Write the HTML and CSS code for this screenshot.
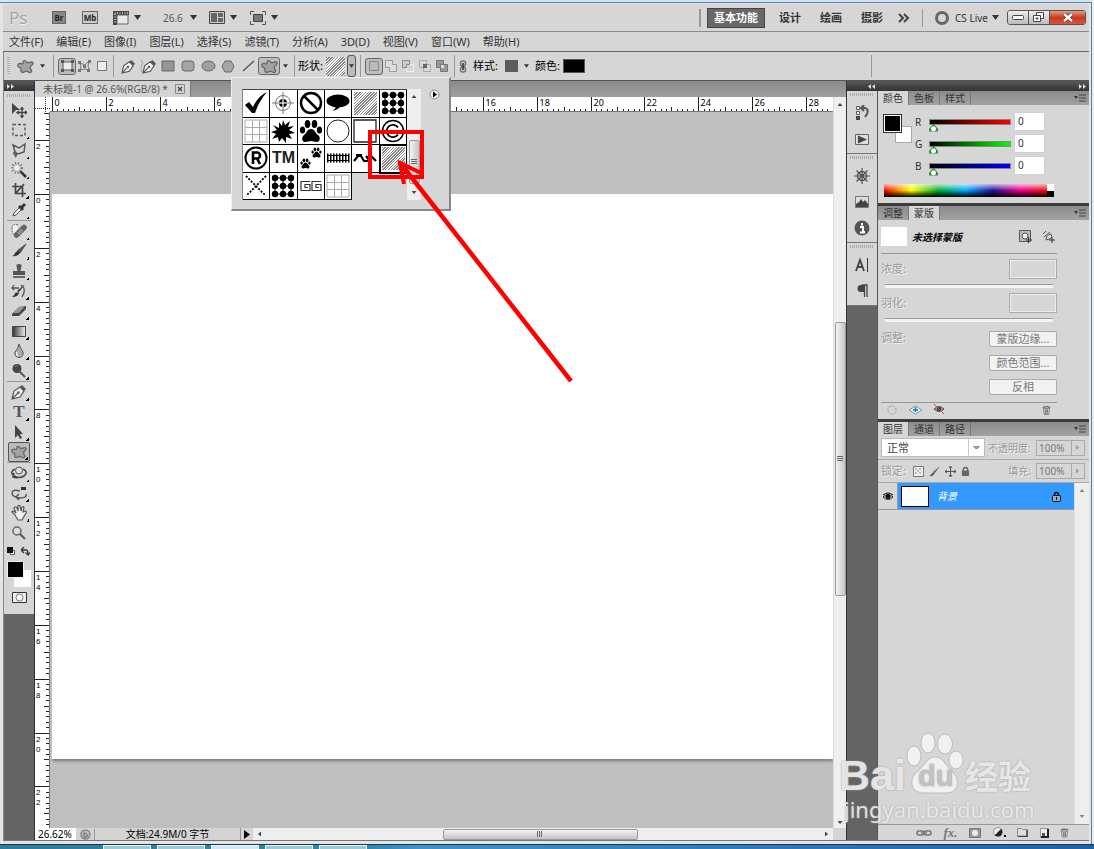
FILE: index.html
```html
<!DOCTYPE html>
<html lang="zh-CN">
  <head>
    <meta charset="UTF-8">
    <meta name="viewport" content="width=device-width, initial-scale=1.0">
    <title>未标题-1 @ 26.6%(RGB/8)</title>
    <link rel="stylesheet" href="styles.css">
  </head>
  <body>
    <!-- Shared icon shapes -->
    <svg class="sprite" aria-hidden="true">
      <symbol id="caret" viewBox="0 0 7 5"><path d="M0 0h7L3.5 5z" fill="#333"/></symbol>
      <symbol id="blob" viewBox="0 0 18 16"><path d="M7 2c2-1 3 1 4 2 2 0 5-2 6 0s-3 3-3 5 3 3 1 5-3-1-5-1-3 2-5 1 0-3-1-4-4-1-3-4 4 0 5-1 0-2 1-3z" fill="#a2a2a2" stroke="#666" stroke-width="1.4"/></symbol>
      <symbol id="pen" viewBox="0 0 16 16"><path d="M1 15l2-8 6-4 4 4-4 6zM1 15l6-6" fill="#eee" stroke="#555" stroke-width="1.2"/><path d="M9 3l2-2 4 4-2 2z" fill="#555"/><circle cx="7.500" cy="8.500" r="1.200" fill="#555"/></symbol>
      <symbol id="trash" viewBox="0 0 12 12"><path d="M2 4h8l-1 8H3z" fill="#ddd" stroke="#666"/><path d="M5 5v6M7 5v6M1 3q5-3 10 0" fill="none" stroke="#666" stroke-width="1.400"/></symbol>
      <symbol id="lock" viewBox="0 0 10 12"><path d="M2.500 6V4a2.500 2.500 0 0 1 5 0v2" fill="none" stroke="currentColor" stroke-width="1.500"/><rect x="1" y="5" width="8" height="6" rx="1" fill="currentColor"/></symbol>
      <symbol id="dots" viewBox="0 0 24 24"><g fill="#000"><circle cx="4" cy="4" r="3.200"/><circle cx="12" cy="4" r="3.200"/><circle cx="20" cy="4" r="3.200"/><circle cx="4" cy="12" r="3.200"/><circle cx="12" cy="12" r="3.200"/><circle cx="20" cy="12" r="3.200"/><circle cx="4" cy="20" r="3.200"/><circle cx="12" cy="20" r="3.200"/><circle cx="20" cy="20" r="3.200"/></g><path d="M4 4h16v16H4zM4 12h16M12 4v16" fill="none" stroke="#000" stroke-width="1"/></symbol>
      <symbol id="grid" viewBox="0 0 24 24"><path d="M1 1h22v22H1zM8.500 1v22M15.500 1v22M1 8.500h22M1 15.500h22" fill="none" stroke="#aaa"/></symbol>
      <symbol id="paw" viewBox="0 0 24 24"><ellipse cx="3.500" cy="11" rx="2.600" ry="3.600"/><ellipse cx="8.500" cy="5" rx="2.800" ry="4"/><ellipse cx="15.500" cy="5" rx="2.800" ry="4"/><ellipse cx="20.500" cy="11" rx="2.600" ry="3.600"/><path d="M12 10c4 0 4 4 7 6s2 7-1 7-4-1-6-1-3 1-6 1-4-5-1-7 3-6 7-6z"/></symbol>
      <symbol id="panelmenu" viewBox="0 0 12 8"><path d="M0 2h4L2 5z" fill="#333"/><path d="M5 1h7M5 4h7M5 7h7" stroke="#444"/></symbol>
    </svg>

    <div class="window">
      <header class="appbar">
        <span class="logo">Ps</span>
        <button class="square br">Br</button>
        <button class="square mb">Mb</button>
        <button class="drop"><svg width="16" height="14" viewBox="0 0 16 14"><path d="M0 0h16v4H4v10H0z" fill="#444"/><path d="M1.500 2h14M2 3v10" stroke="#ddd" stroke-width="1.500" stroke-dasharray="1 1.500"/><path d="M4 4h11v9H4z" fill="#e8e8e8" stroke="#666"/></svg><svg class="caret"><use href="#caret"/></svg></button>
        <button class="drop zoom">26.6<svg class="caret"><use href="#caret"/></svg></button>
        <button class="drop layout"><svg width="16" height="13" viewBox="0 0 16 13"><path d="M.5.500h15v12H.5z" fill="#ccc" stroke="#444"/><path d="M2 2h6v9H2zM9 2h5v4H9zM9 7h5v4H9z" fill="#666"/></svg><svg class="caret"><use href="#caret"/></svg></button>
        <button class="drop"><svg width="16" height="14" viewBox="0 0 16 14"><path d="M.5 4V.500H4M12 .500h3.500V4M.5 10v3.500H4M12 13.500h3.500V10" fill="none" stroke="#555"/><path d="M3.500 3.500h9v7h-9z" fill="#777" stroke="#444"/></svg><svg class="caret"><use href="#caret"/></svg></button>
        <nav class="workspaces">
          <button class="current">基本功能</button>
          <button>设计</button>
          <button>绘画</button>
          <button>摄影</button>
          <button class="more" aria-label="更多工作区"><svg width="12" height="10" viewBox="0 0 12 10"><path d="M1 1l4 4-4 4M6 1l4 4-4 4" fill="none" stroke="#444" stroke-width="2"/></svg></button>
        </nav>
        <button class="cslive"><span class="ring"></span>CS Live<svg class="caret"><use href="#caret"/></svg></button>
        <div class="winbuttons">
          <button aria-label="最小化"><svg width="12" height="6" viewBox="0 0 12 6"><rect x=".5" y=".5" width="11" height="4" rx="1" fill="#fff" stroke="#444"/></svg></button>
          <button aria-label="还原"><svg width="12" height="11" viewBox="0 0 12 11"><path d="M3.500.500h7v6h-7z" fill="#fff" stroke="#444"/><path d="M.5 3.500h7v6h-7zM3 6h2v1H3z" fill="#fff" stroke="#444"/></svg></button>
          <button class="close" aria-label="关闭"><svg width="12" height="9" viewBox="0 0 12 9"><path d="M2 1l8 7M10 1L2 8" stroke="#633" stroke-width="4"/><path d="M2 1l8 7M10 1L2 8" stroke="#fff" stroke-width="2.400"/></svg></button>
        </div>
      </header>

      <nav class="menubar">
        <button>文件(F)</button><button>编辑(E)</button><button>图像(I)</button><button>图层(L)</button><button>选择(S)</button><button>滤镜(T)</button><button>分析(A)</button><button>3D(D)</button><button>视图(V)</button><button>窗口(W)</button><button>帮助(H)</button>
      </nav>

      <div class="options">
        <span class="vgrip"></span>
        <button class="preset" aria-label="工具预设"><svg width="17" height="15"><use href="#blob"/></svg><svg class="caret small"><use href="#caret"/></svg></button>
        <span class="sep"></span>
        <div class="modes">
          <button class="on" aria-label="形状图层"><svg width="13" height="12" viewBox="0 0 13 12"><path d="M2 2h9v8H2z" fill="#eee" stroke="#555"/><path d="M0 0h3v3H0zM10 0h3v3h-3zM0 9h3v3H0zM10 9h3v3h-3z" fill="#555"/></svg></button>
          <button aria-label="路径"><svg width="13" height="12" viewBox="0 0 13 12"><path d="M2 3l5 2 4-4-1 5 1 4-4-1-5 1 1-3z" fill="#ddd" stroke="#777"/><path d="M0 1h3v3H0zM10 0h3v3h-3zM0 9h3v3H0zM9 9h3v3H9zM5 5h3v3H5z" fill="#777"/></svg></button>
          <button aria-label="填充像素"><svg width="10" height="10" viewBox="0 0 10 10"><path d="M.5.500h9v9h-9z" fill="#eee" stroke="#777"/></svg></button>
        </div>
        <span class="sep"></span>
        <div class="shapes">
          <button aria-label="钢笔"><svg width="15" height="15"><use href="#pen"/></svg></button>
          <button aria-label="自由钢笔"><svg width="17" height="15" viewBox="0 0 18 16"><path d="M1 2q3 0 1 4t0 8" fill="none" stroke="#666" stroke-dasharray="1 1"/><use href="#pen" x="2" width="16" height="16"/></svg></button>
          <button aria-label="矩形"><svg width="14" height="12" viewBox="0 0 14 12"><path d="M1 1h12v10H1z" fill="#959595" stroke="#666"/></svg></button>
          <button aria-label="圆角矩形"><svg width="14" height="12" viewBox="0 0 14 12"><rect x="1" y="1" width="12" height="10" rx="3" fill="#a5a5a5" stroke="#666"/></svg></button>
          <button aria-label="椭圆"><svg width="15" height="12" viewBox="0 0 15 12"><ellipse cx="7.500" cy="6" rx="6.500" ry="5" fill="#a0a0a0" stroke="#666"/></svg></button>
          <button aria-label="多边形"><svg width="14" height="13" viewBox="0 0 14 13"><path d="M4 1h6l3 5.500-3 5.500H4L1 6.500z" fill="#a5a5a5" stroke="#666"/></svg></button>
          <button aria-label="直线"><svg width="13" height="12" viewBox="0 0 13 12"><path d="M1 11L12 1" stroke="#555" stroke-width="1.300"/></svg></button>
          <button class="on" aria-label="自定形状"><svg width="17" height="15"><use href="#blob"/></svg></button>
        </div>
        <svg class="caret small"><use href="#caret"/></svg>
        <span class="sep"></span>
        <span class="label">形状:</span>
        <span class="hatch current-shape"></span>
        <button class="shape-open" aria-label="打开形状列表"><svg class="caret small"><use href="#caret"/></svg></button>
        <span class="sep"></span>
        <div class="modes">
          <button class="on" aria-label="新建形状图层"><svg width="12" height="12" viewBox="0 0 12 12"><path d="M1.500 1.500h9v9h-9z" fill="#bbb" stroke="#888"/></svg></button>
          <button aria-label="添加"><svg width="12" height="12" viewBox="0 0 12 12"><path d="M.5.500h7v4h4v7h-7v-4h-4z" fill="#ddd" stroke="#999"/></svg></button>
          <button aria-label="减去"><svg width="12" height="12" viewBox="0 0 12 12"><path d="M.5.500h7v4h-3v3h-4z" fill="#ccc" stroke="#888"/><path d="M8 4.500h3.500v7h-7V8" fill="none" stroke="#eee"/></svg></button>
          <button aria-label="交叉"><svg width="12" height="12" viewBox="0 0 12 12"><path d="M.5.500h7v7h-7zM4.500 4.500h7v7h-7z" fill="none" stroke="#aaa"/><path d="M4 4h4v4H4z" fill="#666"/></svg></button>
          <button aria-label="重叠除外"><svg width="12" height="12" viewBox="0 0 12 12"><path d="M.5.500h7v7h-7zM4.500 4.500h7v7h-7z" fill="#999" stroke="#777"/><path d="M5 5h3v3H5z" fill="#ddd"/></svg></button>
        </div>
        <span class="sep"></span>
        <svg class="chain" width="8" height="13" viewBox="0 0 8 13"><rect x="1.500" y="1" width="5" height="5" rx="2" fill="#ccc" stroke="#777" stroke-width="1.500"/><rect x="1.500" y="7" width="5" height="5" rx="2" fill="#ccc" stroke="#777" stroke-width="1.500"/><path d="M4 3v7" stroke="#333" stroke-width="1.500"/></svg>
        <span class="label">样式:</span>
        <button class="style-swatch" aria-label="样式"></button>
        <svg class="caret small"><use href="#caret"/></svg>
        <span class="label">颜色:</span>
        <button class="color-swatch" aria-label="颜色"></button>
        <span class="sep end"></span>
      </div>

      <main class="workarea">
        <aside class="toolbox">
          <div class="strip"><svg width="7" height="5" viewBox="0 0 7 5"><path d="M0 0l3 2.500L0 5zM4 0l3 2.500L4 5z" fill="#ddd"/></svg></div>
          <div class="tools">
            <span class="grip"></span>
            <div class="group">
              <button class="plain" aria-label="移动"><svg viewBox="0 0 16 16"><path d="M1 1l8 7H5l-4 4z" fill="#444"/><path d="M11 6v9M6.500 10.500h9M9.500 7.500L11 5.500l1.500 2M9.500 13.500l1.500 2 1.500-2M8 9l-2 1.500L8 12M14 9l2 1.500-2 1.500" fill="none" stroke="#444" stroke-width="1.300"/></svg></button>
              <button aria-label="选框"><svg viewBox="0 0 16 16"><path d="M2 2.500h12v11H2z" fill="none" stroke="#555" stroke-width="1.400" stroke-dasharray="3 2"/></svg></button>
              <button aria-label="套索"><svg viewBox="0 0 16 16"><path d="M2 3l6 3 6-4-1 8-6 2-3-2zM5 10q-3 0-2 2t2-1q1 3-1 4" fill="none" stroke="#555" stroke-width="1.400"/></svg></button>
              <button aria-label="魔棒"><svg viewBox="0 0 16 16"><path d="M9 9l6 6" stroke="#333" stroke-width="2.500"/><circle cx="6" cy="6" r="3.500" fill="#eee" stroke="#aaa"/><circle cx="6" cy="6" r="5" fill="none" stroke="#666" stroke-width="2" stroke-dasharray="1 2"/></svg></button>
              <button aria-label="裁剪"><svg viewBox="0 0 16 16"><path d="M4.500 1v10.500H15M1 4.500h10.500V15M13 2L5 11" fill="none" stroke="#444" stroke-width="1.700"/></svg></button>
              <button aria-label="吸管"><svg viewBox="0 0 16 16"><path d="M2 14l1-3 6-6 2 2-6 6z" fill="#eee" stroke="#555"/><path d="M8 4l4 4M10 6l4-4" stroke="#333" stroke-width="3"/></svg></button>
            </div>
            <hr>
            <div class="group">
              <button aria-label="修复画笔"><svg viewBox="0 0 16 16"><path d="M7 2Q1 0 1 6t5 7" fill="#eee" stroke="#555" stroke-dasharray="1.500 1"/><path d="M5.500 12L13 4.500" stroke="#666" stroke-width="5.500" stroke-linecap="round"/><path d="M7.500 10.500l3.500-3.500" stroke="#bbb" stroke-width="3" stroke-dasharray="1 1"/></svg></button>
              <button aria-label="画笔"><svg viewBox="0 0 16 16"><path d="M15 1L9 10 6 8z" fill="#555" stroke="#555"/><path d="M9 9q-1 5-8 4 3-1 3-3 2-3 5-1z" fill="#333"/></svg></button>
              <button aria-label="图章"><svg viewBox="0 0 16 16"><path d="M6.500 8l-1-5Q5 1 8 1t2.500 2l-1 5h4.500v4H2V8z" fill="#555"/><path d="M2 14h12" stroke="#444" stroke-width="1.500"/></svg></button>
              <button aria-label="历史记录画笔"><svg viewBox="0 0 16 16"><path d="M1 5h7M3 2L1 5l2 2M10 2q6 4 1 12" fill="none" stroke="#555" stroke-width="1.300"/><path d="M14 1L8 9 6 8zM8 9q0 5-7 5 3-2 3-4z" fill="#333"/></svg></button>
              <button aria-label="橡皮擦"><svg viewBox="0 0 16 16"><path d="M1 11l7-7 7-1v3l-7 7H1z" fill="#444"/><path d="M2 10l6-6 6-1-6 7z" fill="#999"/></svg></button>
              <button aria-label="渐变"><svg viewBox="0 0 16 16"><defs><linearGradient id="ramp"><stop stop-color="#333"/><stop offset="1" stop-color="#eee"/></linearGradient></defs><path d="M1.500 3.500h13v10h-13z" fill="url(#ramp)" stroke="#444"/></svg></button>
              <button aria-label="模糊"><svg viewBox="0 0 16 16"><path d="M8 1q1 4 4 8a4.200 4.200 0 1 1-8 0q3-3 4-8z" fill="#aaa" stroke="#555"/><path d="M6 9q-1 3 1 4" fill="none" stroke="#eee" stroke-width="1.500"/></svg></button>
              <button aria-label="减淡"><svg viewBox="0 0 16 16"><circle cx="6" cy="5.500" r="4.500" fill="#444"/><path d="M8 8l6 6" stroke="#555" stroke-width="2"/><path d="M4 4q1-2 3-1" stroke="#888" fill="none"/></svg></button>
            </div>
            <hr>
            <div class="group">
              <button aria-label="钢笔"><svg viewBox="0 0 16 16"><use href="#pen"/></svg></button>
              <button aria-label="文字" class="type">T</button>
              <button aria-label="路径选择"><svg viewBox="0 0 16 16"><path d="M4 1l8 9H9l2 4-2 1-2-4-3 3z" fill="#444"/></svg></button>
              <button aria-label="自定形状" class="on"><svg viewBox="0 0 18 16"><use href="#blob"/></svg></button>
            </div>
            <hr>
            <div class="group">
              <button aria-label="3D 旋转"><svg viewBox="0 0 16 16"><path d="M4 4q-6 3-1 7 5 3 10 0 5-4-1-7M3 8l-1 4 4 1" fill="none" stroke="#444" stroke-width="1.500"/><circle cx="8" cy="5.500" r="3.500" fill="#ddd" stroke="#555"/></svg></button>
              <button aria-label="3D 相机"><svg viewBox="0 0 16 16"><path d="M9 6Q1 4 1 8t8 5q7 0 6-4M8 9l-3 3 3 3" fill="none" stroke="#555" stroke-width="1.500"/><path d="M10 2h5v3h-5z" fill="#333"/></svg></button>
              <button aria-label="抓手"><svg viewBox="0 0 16 16"><path d="M4 10L1 7q1-2 4 1L3 3q1-2 3 0l1 3V1q1-1 2 0l1 5 1-4q2-1 2 1l-1 4 2-1q2 0 1 2l-4 7H7z" fill="#eee" stroke="#555" stroke-width="1.200"/></svg></button>
              <button class="plain" aria-label="缩放"><svg viewBox="0 0 16 16"><circle cx="6" cy="6" r="4" fill="#ddd" stroke="#666" stroke-width="1.500"/><path d="M9 9l5 5" stroke="#555" stroke-width="2"/></svg></button>
            </div>
            <div class="swap">
              <svg width="8" height="8" viewBox="0 0 8 8"><path d="M3.500 3.500h4v4h-4z" fill="#fff" stroke="#555"/><path d="M0 0h6v6H0z" fill="#111"/></svg>
              <svg width="9" height="9" viewBox="0 0 9 9"><path d="M1 3h4q2 0 2 4M3 0L0 3l3 3M4.500 5.500L7 8l2-2.500" fill="none" stroke="#333" stroke-width="1.300"/></svg>
            </div>
            <div class="fgbg"><span class="bg"></span><span class="fg"></span></div>
            <button class="quickmask" aria-label="快速蒙版"><svg width="15" height="11" viewBox="0 0 15 11"><path d="M.5.500h14v10H.5z" fill="#eee" stroke="#333"/><circle cx="7.500" cy="5.500" r="3.500" fill="#fff" stroke="#777"/></svg></button>
          </div>
        </aside>

        <section class="document">
          <div class="tabbar"><div class="tab">未标题-1 @ 26.6%(RGB/8) * <button aria-label="关闭文档"><svg width="10" height="10" viewBox="0 0 10 10"><path d="M.5.500h9v9h-9z" fill="none" stroke="#888"/><path d="M3 3l4 4M7 3l-4 4" stroke="#444" stroke-width="1.300"/></svg></button></div></div>
          <div class="view">
            <svg class="corner" viewBox="0 0 15 15"><path d="M0 11.500h15M10.500 0v15" stroke="#333" stroke-dasharray="1 1"/></svg>
            <svg class="ruler" id="hruler"></svg>
            <svg class="ruler" id="vruler"></svg>
            <div class="canvas"><div class="paper"></div></div>
            <div class="vscroll">
              <span class="up"></span>
              <div class="thumb"><i></i></div>
              <span class="down"></span>
            </div>
          </div>
          <footer class="status">
            <input class="zoomvalue" aria-label="缩放比例" value="26.62%">
            <span class="clock"><svg width="11" height="11" viewBox="0 0 11 11"><circle cx="5.500" cy="5.500" r="4.500" fill="#bbb" stroke="#888" stroke-width="1.500"/><path d="M4 4v4h3q1-4-3-4" fill="none" stroke="#666"/></svg></span>
            <span class="docsize">文档:24.9M/0 字节</span>
            <button class="statusmenu" aria-label="状态菜单"><svg width="6" height="9" viewBox="0 0 6 9"><path d="M0 0l6 4.500L0 9z"/></svg></button>
            <div class="hscroll"><span class="left"></span><div class="thumb"><i></i></div><span class="right"></span></div>
          </footer>
        </section>

        <aside class="side">
          <div class="strip"><svg width="7" height="5" viewBox="0 0 7 5"><path d="M3 0L0 2.500 3 5zM7 0L4 2.500 7 5z" fill="#ddd"/></svg><svg width="7" height="5" viewBox="0 0 7 5"><path d="M0 0l3 2.500L0 5zM4 0l3 2.500L4 5z" fill="#ddd"/></svg></div>
          <div class="columns">
            <div class="dock">
              <div class="dockgroup">
                <span class="grip"></span>
                <button aria-label="历史记录"><svg viewBox="0 0 16 16"><path d="M2.500 1.500h3v3h-3zM2.500 6.500h3v3h-3z" fill="#fff" stroke="#555"/><path d="M2 11h4v4H2z" fill="#444"/><path d="M8 3h3q4 1 2 6l-2 3M10 0L7 3l3 3" fill="none" stroke="#555" stroke-width="2"/></svg></button>
                <button aria-label="动作"><svg viewBox="0 0 16 16"><path d="M1.500 3.500h13v10h-13z" fill="#ddd" stroke="#666"/><path d="M4 4.500l9 4-9 4z" fill="#444"/></svg></button>
              </div>
              <div class="dockgroup three">
                <span class="grip"></span>
                <button aria-label="导航器"><svg viewBox="0 0 16 16"><circle cx="8" cy="8" r="4.500" fill="none" stroke="#555" stroke-width="1.500"/><circle cx="8" cy="8" r="2" fill="#444"/><path d="M8 0v16M0 8h16M2.500 2.500l11 11M13.500 2.500l-11 11" stroke="#555" stroke-width="1.200"/></svg></button>
                <button aria-label="直方图"><svg viewBox="0 0 16 16"><path d="M1.500 2.500h13v11h-13z" fill="#ddd" stroke="#777"/><path d="M2 13v-3l3-2 2-3 2 3 2-2 3 4v3z" fill="#444"/></svg></button>
                <button aria-label="信息"><svg viewBox="0 0 16 16"><circle cx="8" cy="8" r="7.500" fill="#555"/><path d="M6 7h3v5h2M6 12.500h5M8 3v2.500" fill="none" stroke="#fff" stroke-width="2"/></svg></button>
              </div>
              <div class="dockgroup">
                <span class="grip"></span>
                <button aria-label="字符"><svg viewBox="0 0 16 16"><path d="M2 14L6 3l4 11M3 10h6" fill="none" stroke="#444" stroke-width="1.800"/><path d="M13.500 1v14" stroke="#333"/></svg></button>
                <button aria-label="段落"><svg viewBox="0 0 16 16"><path d="M8 2h5v12M10.500 2v12" fill="none" stroke="#444" stroke-width="1.300"/><path d="M10 2H7a3.500 3.500 0 0 0 0 7h3z" fill="#444"/></svg></button>
              </div>
            </div>

            <div class="panels">
              <section class="panel">
                <div class="tabs"><button class="active">颜色</button><button>色板</button><button>样式</button><svg class="pm"><use href="#panelmenu"/></svg></div>
                <div class="color-body">
                  <div class="rgb">
                    <div class="pair"><span class="bg"></span><span class="fg"></span></div>
                    <div class="channels">
                      <label for="r">R</label><input class="track red" type="range" min="0" max="255" value="0" aria-label="R"><input class="num" id="r" value="0">
                      <label for="g">G</label><input class="track green" type="range" min="0" max="255" value="0" aria-label="G"><input class="num" id="g" value="0">
                      <label for="b">B</label><input class="track blue" type="range" min="0" max="255" value="0" aria-label="B"><input class="num" id="b" value="0">
                    </div>
                  </div>
                  <div class="spectrum"><span></span></div>
                </div>
              </section>

              <section class="panel">
                <div class="tabs"><button>调整</button><button class="active">蒙版</button><svg class="pm"><use href="#panelmenu"/></svg></div>
                <div class="mask-body">
                  <div class="mask-head">
                    <span class="mask-thumb"></span><em>未选择蒙版</em>
                    <svg width="13" height="13" viewBox="0 0 13 13"><path d="M.5.500h11v11H.5z" fill="#bbb" stroke="#555"/><circle cx="6" cy="6" r="3" fill="#eee" stroke="#555"/><path d="M9.500 7v6M7 10h6" stroke="#333"/></svg>
                    <svg width="13" height="13" viewBox="0 0 13 13"><path d="M1 4l3-3M2 7l6-5M4 10q0-5 5-6l1 3q-1 2-6 3z" fill="#ddd" stroke="#555"/><path d="M10 7v6M7 10h6" stroke="#333"/></svg>
                  </div>
                  <div class="mask-row"><label for="density">浓度:</label><input id="density" disabled></div>
                  <div class="rail"></div>
                  <div class="mask-row"><label for="feather">羽化:</label><input id="feather" disabled></div>
                  <div class="rail"></div>
                  <div class="refine">
                    <span>调整:</span>
                    <div><button disabled>蒙版边缘...</button><button disabled>颜色范围...</button><button disabled>反相</button></div>
                  </div>
                  <div class="mask-foot">
                    <svg width="12" height="12" viewBox="0 0 12 12"><circle cx="6" cy="6" r="4" fill="none" stroke="#999" stroke-dasharray="1 1.500" stroke-width="1.500"/></svg>
                    <svg width="15" height="10" viewBox="0 0 15 10"><path d="M1 5l6.500-4L14 5 7.500 9z" fill="#e6f4f6" stroke="#68a0aa"/><path d="M7.500 2v5M5 5h5" stroke="#1878a8" stroke-width="1.300"/></svg>
                    <svg width="12" height="11" viewBox="0 0 12 11"><path d="M1 5q5-5 10 0-5 5-10 0z" fill="#999" stroke="#555"/><circle cx="6" cy="5" r="2" fill="#333"/><path d="M1 0l10 10" stroke="#d44"/></svg>
                    <svg class="last" width="9" height="10"><use href="#trash"/></svg>
                  </div>
                </div>
              </section>

              <section class="panel layers">
                <div class="tabs"><button class="active">图层</button><button>通道</button><button>路径</button><svg class="pm"><use href="#panelmenu"/></svg></div>
                <div class="layer-row">
                  <select class="blend" aria-label="混合模式"><option>正常</option></select>
                  <label for="opacity">不透明度:</label>
                  <span class="pct"><input id="opacity" value="100%" disabled><button disabled aria-label="不透明度滑块"><span class="right"></span></button></span>
                </div>
                <div class="layer-row locks">
                  <span class="dim">锁定:</span>
                  <svg width="11" height="11" viewBox="0 0 11 11"><path d="M.5.500h10v10H.5z" fill="#eee" stroke="#777"/><path d="M2 2h2v2H2zM6 2h2v2H6zM4 4h2v2H4zM2 6h2v2H2zM6 6h2v2H6z" fill="#bbb"/></svg>
                  <svg width="11" height="11" viewBox="0 0 11 11"><path d="M11 0L6 7 4 6z" fill="#666"/><path d="M6 6q-1 5-6 4 3-1 3-3z" fill="#555"/></svg>
                  <svg width="11" height="11" viewBox="0 0 11 11"><path d="M5.500 0v11M0 5.500h11M4 2l1.500-2L7 2M4 9l1.500 2L7 9M2 4L0 5.500 2 7M9 4l2 1.500L9 7" fill="none" stroke="#555"/></svg>
                  <svg width="9" height="11"><use href="#lock"/></svg>
                  <label for="fill">填充:</label>
                  <span class="pct"><input id="fill" value="100%" disabled><button disabled aria-label="填充滑块"><span class="right"></span></button></span>
                </div>
                <div class="layer-area">
                  <div class="layer-list">
                    <div class="layer">
                      <button class="eye" aria-label="显示图层"><svg width="12" height="9" viewBox="0 0 12 9"><path d="M1 5q5-5 10 0-5 5-10 0z" fill="#bbb" stroke="#333"/><circle cx="6" cy="4.500" r="2.500" fill="#111"/><path d="M1 3q5-4 10 0" fill="none" stroke="#111"/></svg></button>
                      <div class="layer-main"><span class="layer-thumb"></span><em>背景</em><svg width="9" height="11" viewBox="0 0 9 11"><path d="M2.500 5V3.500a2 2 0 0 1 4 0V5" fill="none" stroke="#012" stroke-width="1.500"/><rect x=".5" y="4.500" width="8" height="6" rx="1" fill="#9ab" stroke="#012"/><path d="M4 6h1v3H4z" fill="#012"/></svg></div>
                    </div>
                  </div>
                  <div class="lscroll"><span class="up"></span><span class="down"></span></div>
                </div>
                <footer class="layer-foot">
                  <svg width="16" height="8" viewBox="0 0 16 8"><rect x="1" y="2" width="7" height="4" rx="2" fill="none" stroke="#777" stroke-width="1.500"/><rect x="8" y="2" width="7" height="4" rx="2" fill="none" stroke="#777" stroke-width="1.500"/><path d="M5 4h6" stroke="#777" stroke-width="1.500"/></svg>
                  <i>fx.</i>
                  <svg width="12" height="10" viewBox="0 0 12 10"><path d="M.5.500h11v9H.5z" fill="#999" stroke="#777"/><circle cx="6" cy="5" r="3" fill="#eee"/></svg>
                  <svg width="13" height="11" viewBox="0 0 13 11"><circle cx="5" cy="5" r="4.500" fill="#222"/><path d="M2 8a4 4 0 0 1 6-6z" fill="#eee"/><path d="M11 8h2v2h-2z"/></svg>
                  <svg width="11" height="9" viewBox="0 0 11 9"><path d="M.5.500h4l1 1h5v7H.5z" fill="#ddd" stroke="#888"/><path d="M10 2v6.500H1" fill="none" stroke="#444" stroke-width="1.500"/></svg>
                  <svg width="9" height="10" viewBox="0 0 9 10"><path d="M.5.500h8v9h-8z" fill="#eee" stroke="#999"/><path d="M8 1v8H1" fill="none" stroke="#222" stroke-width="2"/><path d="M2 5h3v3H2z" fill="#555"/></svg>
                  <svg width="9" height="11"><use href="#trash"/></svg>
                </footer>
              </section>
            </div>
          </div>
        </aside>
      </main>
    </div>
    <footer class="taskbar"><i></i><i></i><i></i><i></i><i></i></footer>

    <!-- Custom shape picker -->
    <div class="picker">
      <div class="picker-grid">
        <button><svg viewBox="0 0 24 24"><path d="M1 14l4-3 4 5Q14 5 23 1q-8 9-12 21H8z"/></svg></button>
        <button><svg viewBox="0 0 24 24"><circle cx="12" cy="12" r="7.500" fill="none" stroke="#777"/><circle cx="12" cy="12" r="4"/><path d="M12 1v22M1 12h22" stroke="#777"/><path d="M12 8v8M8 12h8" stroke="#fff"/></svg></button>
        <button><svg viewBox="0 0 24 24"><circle cx="12" cy="12" r="10" fill="none" stroke="#000" stroke-width="2.500"/><path d="M5 5l14 14" stroke="#000" stroke-width="2.500"/></svg></button>
        <button><svg viewBox="0 0 24 24"><ellipse cx="12" cy="10" rx="11.500" ry="6.500"/><path d="M10 14q0 4-4 6 7-1 9-6z"/></svg></button>
        <button><span class="hatch"></span></button>
        <button><svg viewBox="0 0 24 24"><use href="#dots"/></svg></button>
        <button><svg viewBox="0 0 24 24"><use href="#grid"/></svg></button>
        <button><svg viewBox="0 0 24 24"><path d="M12 1l2 5 5-4-2 6 6-1-5 4 6 3-6 1 3 5-6-2v6l-4-5-3 4-1-5-6 2 4-5-5-2 6-2-4-5 6 3V3l3 4z"/></svg></button>
        <button><svg viewBox="0 0 24 24"><use href="#paw"/></svg></button>
        <button><svg viewBox="0 0 24 24"><circle cx="12" cy="12" r="11" fill="none" stroke="#222"/></svg></button>
        <button><svg viewBox="0 0 24 24"><path d="M1 1h22v22H1z" fill="none" stroke="#222" stroke-width="1.300"/></svg></button>
        <button><svg viewBox="0 0 24 24"><circle cx="12" cy="12" r="10.500" fill="none" stroke="#000" stroke-width="1.500"/><path d="M17 8.500a6.200 6.200 0 1 0 0 7" fill="none" stroke="#000" stroke-width="1.800"/></svg></button>
        <button><svg viewBox="0 0 24 24"><circle cx="12" cy="12" r="10.500" fill="none" stroke="#000" stroke-width="2"/><path d="M9 18V6.500h4a3 3 0 0 1 0 6H9m4 0l3 5.500" fill="none" stroke="#000" stroke-width="2.600"/></svg></button>
        <button class="tm">TM</button>
        <button><svg viewBox="0 0 24 24"><use href="#paw" x="12" y="1" width="11" height="11"/><use href="#paw" x="1" y="12" width="11" height="11"/></svg></button>
        <button><svg viewBox="0 0 24 24"><path d="M1 9.500h22M1 14.500h22" stroke="#000"/><path d="M1 12h23" stroke="#000" stroke-width="9" stroke-dasharray="1.500 1.500"/></svg></button>
        <button><svg viewBox="0 0 24 24"><path d="M1 15l4-5h3l3 5h3l4-5 5 5M3 9h6M13 10l4 5" fill="none" stroke="#000" stroke-width="2.200"/></svg></button>
        <button class="chosen"><span class="hatch"></span></button>
        <button><svg viewBox="0 0 24 24"><path d="M2 2l20 20M22 2L2 22" stroke="#000" stroke-width="1.800" stroke-dasharray="2 1.500"/></svg></button>
        <button><svg viewBox="0 0 24 24"><use href="#dots"/></svg></button>
        <button><svg viewBox="0 0 24 24"><path d="M11 7.500H2v9h9v-6H6v3h3M22 7.500h-9v9h9v-6h-5v3h3" fill="none" stroke="#333" stroke-width="1.200"/></svg></button>
        <button><svg viewBox="0 0 24 24"><use href="#grid"/></svg></button>
      </div>
      <div class="picker-scroll"><span class="up"></span><div class="thumb"><i></i></div><span class="down"></span></div>
      <button class="picker-menu" aria-label="形状菜单"><svg width="11" height="11" viewBox="0 0 11 11"><circle cx="5.500" cy="5.500" r="4.500" fill="#eee" stroke="#888"/><path d="M4 2.500l4 3-4 3z"/></svg></button>
    </div>

    <!-- Red callout -->
    <svg class="callout" width="220" height="270" viewBox="0 0 220 270">
      <path d="M10 12h52v45H10z" fill="none" stroke="#f00" stroke-width="4"/>
      <path d="M211 261L41 44" fill="none" stroke="#f00" stroke-width="4.500"/>
      <path d="M44 64L40 43l21 10" fill="none" stroke="#f00" stroke-width="4"/>
    </svg>

    <div class="watermark">
      <div class="brand">
        <span class="bai">Bai</span>
        <span class="pawmark"><svg width="58" height="62" viewBox="0 0 58 62"><g fill="#f4f4f4" stroke="#bbb"><ellipse cx="8" cy="24" rx="7" ry="10"/><ellipse cx="22" cy="11" rx="7" ry="10"/><ellipse cx="39" cy="12" rx="7.500" ry="10"/><ellipse cx="50" cy="28" rx="7" ry="9"/><path d="M29 25c8 0 10 8 16 13 9 8 9 22-4 23H17C3 60 3 46 12 39c7-5 9-14 17-14z"/></g></svg><b>du</b></span>
        <span class="jingyan">经验</span>
      </div>
      <div class="url">jingyan.baidu.com</div>
    </div>

    <script>
      const NS = "http://www.w3.org/2000/svg";
      const STEP = 53.85; // screen distance of two centimetres at this zoom

      function add(parent, name, attrs, text) {
        const el = document.createElementNS(NS, name);
        for (const key in attrs) el.setAttribute(key, attrs[key]);
        if (text) el.textContent = text;
        parent.appendChild(el);
      }

      function drawRuler(id, origin, vertical) {
        const svg = document.getElementById(id);
        const length = vertical ? svg.clientHeight : svg.clientWidth;
        for (let i = -20; origin + i * STEP / 10 < length; i++) {
          const pos = Math.round(origin + i * STEP / 10) + 0.5;
          if (pos < 0) continue;
          const size = i % 10 === 0 ? 15 : i % 5 === 0 ? 5 : 3;
          add(svg, "line", vertical
            ? { x1: 14 - size, x2: 14, y1: pos, y2: pos, stroke: "#222" }
            : { x1: pos, x2: pos, y1: 15 - size, y2: 15, stroke: "#222" });
          if (i % 10 !== 0) continue;
          const value = String(Math.abs(i / 5));
          if (vertical) {
            [...value].forEach((digit, n) => add(svg, "text", { x: 1, y: pos + 8 + n * 10 }, digit));
          } else {
            add(svg, "text", { x: pos + 2, y: 9 }, value);
          }
        }
      }

      drawRuler("hruler", 2, false);
      drawRuler("vruler", 82, true);
    </script>
  </body>
</html>
```
FILE: styles.css
```css
* {
    box-sizing: border-box;
}
body {
    margin: 0;
    height: 100vh;
    display: flex;
    flex-direction: column;
    overflow: hidden;
    position: relative;
    background: #e9eef2;
    font-family: "Noto Sans", "Noto Sans CJK SC", sans-serif;
    font-size: 11px;
    line-height: 14px;
    color: #333;
}
button, input, select {
    font: inherit;
    color: inherit;
    margin: 0;
    padding: 0;
    border: 0;
    background: none;
    border-radius: 0;
}
svg {
    display: block;
    flex: none;
}
.sprite {
    position: absolute;
    width: 0;
    height: 0;
}
.caret {
    width: 7px;
    height: 5px;
}
.caret.small {
    width: 5px;
    height: 4px;
}
.window {
    flex: 1;
    min-height: 0;
    display: flex;
    flex-direction: column;
    margin: 2px 2px 0 0;
    padding: 1px 2px 3px 3px;
    border-top: 1px solid #5b7fa4;
    border-right: 1px solid #5b7fa4;
    background: #e4e4e4;
    box-shadow: 0 -3px 0 #d4e6f6;
}

/* Application bar */
.appbar {
    height: 28px;
    display: flex;
    align-items: center;
    padding: 0 3px 0 6px;
    background: #d6d6d6;
    border-bottom: 1px solid #8a8a8a;
}
.appbar button {
    display: flex;
    align-items: center;
}
.logo {
    width: 43px;
    font-size: 17px;
    color: #a4a4a4;
    text-shadow: 0 1px 0 #f4f4f4;
}
.square {
    width: 14px;
    height: 13px;
    justify-content: center;
    background: #888;
    border: 1px solid #666;
    font-size: 8px;
    font-weight: bold;
    color: #222;
}
.mb {
    width: 16px;
    margin: 0 15px 0 16px;
    background: #ccc;
}
.drop {
    gap: 5px;
    margin-right: 17px;
}
.zoom {
    margin-left: 5px;
    margin-right: 12px;
    gap: 7px;
    font-size: 10px;
    color: #555;
}
.layout {
    margin-right: 13px;
}
.workspaces {
    display: flex;
    align-items: center;
    margin-left: auto;
    padding: 0 11px 0 6px;
    border-left: 2px solid #999;
    border-right: 1px solid #999;
    font-weight: bold;
    height: 18px;
}
.workspaces button {
    height: 20px;
    padding: 0 9px;
    margin-right: 1px;
}
.workspaces .current {
    padding: 0 6px;
    margin-right: 5px;
    background: #686868;
    border: 1px solid #444;
    color: #fff;
}
.workspaces .more {
    padding: 0 0 0 5px;
}
.cslive {
    gap: 4px;
    margin: 0 8px 0 12px;
    font-size: 10px;
}
.ring {
    width: 14px;
    height: 14px;
    margin-right: 2px;
    border: 3px solid #666;
    border-radius: 50%;
}
.winbuttons {
    display: flex;
    height: 15px;
    border: 1px solid #555;
    border-radius: 3px;
    overflow: hidden;
}
.winbuttons button {
    width: 21px;
    justify-content: center;
    background: linear-gradient(#eee, #bbb);
    border-right: 1px solid #555;
}
.winbuttons .close {
    width: 35px;
    border: 0;
    background: linear-gradient(#e59a86, #c93a20 50%, #d8563a);
}

/* Menus */
.menubar {
    height: 20px;
    display: flex;
    align-items: center;
    gap: 13px;
    padding-left: 6px;
    background: #d6d6d6;
    border-bottom: 1px solid #666;
}
.menubar button {
    white-space: nowrap;
}

/* Tool options */
.options {
    height: 29px;
    display: flex;
    align-items: center;
    padding-left: 3px;
    background: #d6d6d6;
    border-bottom: 1px solid #555;
    border-left: 1px solid #888;
}
.vgrip {
    width: 3px;
    height: 18px;
    background: repeating-linear-gradient(#aaa 0 1px, #ddd 1px 2px);
}
.preset {
    display: flex;
    align-items: center;
    gap: 6px;
    margin: 0 8px 0 7px;
}
.sep {
    width: 1px;
    height: 22px;
    background: #999;
}
.sep.end {
    margin-left: auto;
    margin-right: 217px;
}
.modes, .shapes {
    display: flex;
    align-items: center;
    margin: 0 3px 0 4px;
}
.modes button, .shapes button {
    width: 17px;
    height: 17px;
    display: flex;
    align-items: center;
    justify-content: center;
}
.shapes button {
    width: 20px;
    height: 18px;
}
.modes .on, .shapes .on {
    width: 18px;
    border: 1px solid #666;
    border-radius: 3px;
    background: #bebebe;
}
.shapes .on {
    width: 22px;
}
.shapes + .caret {
    margin-right: 6px;
}
.label {
    margin: 0 3px;
    color: #000;
}
.hatch {
    display: block;
    width: 23px;
    height: 23px;
    background: repeating-linear-gradient(135deg, #888 0 1px, #fff 1px 2px);
}
.current-shape {
    width: 19px;
    height: 19px;
}
.shape-open {
    width: 9px;
    height: 22px;
    margin: 0 4px 0 2px;
    display: flex;
    align-items: center;
    justify-content: center;
    border: 1px solid #555;
    border-radius: 3px;
    background: #bbb;
}
.chain {
    margin: 0 3px 0 4px;
}
.style-swatch {
    width: 13px;
    height: 12px;
    margin: 0 6px 0 4px;
    background: #5c5c5c;
}
.style-swatch + .caret {
    margin-right: 3px;
}
.color-swatch {
    width: 22px;
    height: 14px;
    background: #000;
    border: 1px solid #555;
}

/* Work area */
.workarea {
    flex: 1;
    min-height: 0;
    display: flex;
    background: #646464;
    border-left: 1px solid #888;
    border-bottom: 1px solid #777;
}
.strip {
    height: 10px;
    display: flex;
    align-items: center;
    justify-content: space-between;
    padding: 0 3px;
    background: linear-gradient(#585858, #333);
}
.grip {
    display: block;
    height: 3px;
    background: repeating-linear-gradient(90deg, #aaa 0 1px, #d6d6d6 1px 2px);
}
.toolbox {
    width: 31px;
    border-right: 1px solid #333;
}
.tools {
    display: flex;
    flex-direction: column;
    height: 523px;
    padding: 3px 3px 0;
    background: #d6d6d6;
}
.tools .grip {
    margin-bottom: 3px;
}
.tools hr {
    width: 100%;
    height: 1px;
    margin: 0;
    border: 0;
    background: #999;
}
.group {
    display: flex;
    flex-direction: column;
    align-items: center;
}
.group button {
    width: 22px;
    height: 20px;
    display: flex;
    align-items: center;
    justify-content: center;
    background: linear-gradient(135deg, transparent 50%, #000 50%) right 1px bottom 1px / 3px 3px no-repeat;
}
.group .plain {
    background: none;
}
.group svg {
    width: 16px;
    height: 16px;
}
.group .on {
    border: 1px solid #555;
    border-radius: 2px;
    background-color: #bbb;
}
.group .type {
    font-family: "Liberation Serif", serif;
    font-size: 17px;
    font-weight: bold;
    color: #555;
}
.swap {
    display: flex;
    justify-content: space-between;
    padding: 4px 1px 5px 0;
}
.fgbg, .pair {
    position: relative;
    height: 26px;
}
.fgbg span, .pair span {
    position: absolute;
    width: 17px;
    height: 17px;
}
.fg {
    left: 0;
    top: 0;
    background: #000;
    border: 1px solid #eee;
}
.bg {
    right: 0;
    bottom: 0;
    background: #fff;
}
.quickmask {
    margin: 5px auto 0;
}

/* Document window */
.document {
    flex: 1;
    min-width: 0;
    display: flex;
    flex-direction: column;
    border-right: 1px solid #333;
}
.tabbar {
    height: 16px;
    background: linear-gradient(#8a8a8a, #a0a0a0);
}
.tab {
    width: 156px;
    height: 16px;
    display: flex;
    align-items: center;
    gap: 7px;
    padding-left: 8px;
    white-space: nowrap;
    font-size: 10px;
    color: #555;
    background: #d4d4d4;
    border-right: 1px solid #777;
}
.view {
    flex: 1;
    min-height: 0;
    display: grid;
    grid-template-columns: 15px minmax(0, 1fr) 13px;
    grid-template-rows: 15px minmax(0, 1fr);
}
.corner {
    width: 15px;
    height: 15px;
    background: #fff;
}
.ruler {
    width: 100%;
    height: 100%;
    background: #fff;
    overflow: hidden;
    font-size: 9px;
    shape-rendering: crispEdges;
}
#hruler {
    border-bottom: 1px solid #777;
}
#vruler {
    border-right: 1px solid #777;
    font-family: "Liberation Sans", sans-serif;
    font-size: 8px;
}
.canvas {
    display: flex;
    padding: 82px 0 69px 2px;
    background: #bfbfbf;
}
.paper {
    flex: 1;
    background: #fff;
    box-shadow: 0 2px 3px #777;
    clip-path: inset(0 0 -6px 0);
}
.vscroll {
    grid-column: 3;
    grid-row: 1 / 3;
    display: flex;
    flex-direction: column;
    align-items: center;
    justify-content: space-between;
    padding: 6px 0 4px;
    background: #efefef;
    border-left: 1px solid #ddd;
}
.canvas + .vscroll .thumb {
    width: 11px;
    height: 274px;
    margin-bottom: 9px;
}
.thumb {
    display: flex;
    align-items: center;
    justify-content: center;
    border: 1px solid #999;
    border-radius: 2px;
    background: linear-gradient(90deg, #f4f4f4, #c4c4c8);
}
.thumb i {
    width: 6px;
    height: 6px;
    background: repeating-linear-gradient(#666 0 1px, transparent 1px 2px);
}
.up, .down, .left, .right {
    display: block;
    flex: none;
    width: 5px;
    height: 3px;
    background: #444;
    clip-path: polygon(0 100%, 50% 0, 100% 100%);
}
.down {
    clip-path: polygon(0 0, 100% 0, 50% 100%);
}
.left, .right {
    width: 3px;
    height: 5px;
    clip-path: polygon(0 50%, 100% 0, 100% 100%);
}
.right {
    clip-path: polygon(0 0, 100% 50%, 0 100%);
}
.status {
    height: 12px;
    display: flex;
    align-items: center;
    font-size: 10px;
    line-height: 12px;
    background: #d4d4d4;
    color: #000;
}
.zoomvalue {
    width: 41px;
    height: 12px;
    padding-left: 3px;
    background: #fff;
}
.clock {
    width: 19px;
    padding-left: 4px;
    border-right: 1px solid #999;
}
.docsize {
    width: 146px;
    text-align: center;
    border-right: 1px solid #999;
}
.statusmenu {
    width: 12px;
    padding-left: 3px;
}
.hscroll {
    flex: 1;
    height: 12px;
    display: flex;
    align-items: center;
    justify-content: space-between;
    margin-right: 13px;
    padding: 0 5px;
    background: #eee;
}
.hscroll .thumb {
    width: 195px;
    height: 11px;
    margin-right: 6px;
    background: linear-gradient(#f4f4f4, #c4c4c8);
}
.hscroll .thumb i {
    background: repeating-linear-gradient(90deg, #666 0 1px, transparent 1px 2px);
}

/* Dock and panels */
.side {
    width: 242px;
    display: flex;
    flex-direction: column;
}
.side .strip {
    padding: 0 3px 0 21px;
}
.columns {
    flex: 1;
    min-height: 0;
    display: flex;
}
.dock {
    width: 30px;
}
.dockgroup {
    height: 63px;
    display: flex;
    flex-direction: column;
    align-items: center;
    gap: 10px;
    padding-top: 2px;
    background: #d6d6d6;
    border-bottom: 1px solid #777;
}
.dockgroup.three {
    height: 89px;
}
.dock .grip {
    width: 24px;
}
.dock .grip + button {
    margin-top: -1px;
}
.dock button svg {
    width: 16px;
    height: 16px;
}
.panels {
    flex: 1;
    min-width: 0;
    display: flex;
    flex-direction: column;
    gap: 3px;
    background: #3c3c3c;
    border-left: 1px solid #555;
}
.panel {
    background: #d6d6d6;
}
.tabs {
    height: 14px;
    display: flex;
    background: linear-gradient(#8c8c8c, #a2a2a2);
    font-size: 10px;
}
.tabs button {
    width: 31px;
    border-right: 1px solid #777;
}
.tabs .active {
    background: #d6d6d6;
}
.pm {
    width: 12px;
    height: 8px;
    margin: 3px 3px 0 auto;
}
.color-body {
    height: 98px;
    padding: 7px 35px 0 6px;
}
.rgb {
    display: flex;
    gap: 3px;
    margin-right: 9px;
}
.pair {
    width: 28px;
    height: 28px;
    margin-top: 3px;
}
.pair .fg {
    border: 1px solid #fff;
    outline: 1px solid #333;
}
.pair .bg {
    border: 1px solid #aaa;
}
.channels {
    flex: 1;
    display: grid;
    grid-template-columns: 11px 1fr 31px;
    column-gap: 3px;
    row-gap: 3px;
    align-items: center;
    font-size: 10px;
}
.track {
    appearance: none;
    width: 100%;
    height: 6px;
    min-width: 0;
    border: 1px solid #888;
}
.track::-webkit-slider-thumb {
    appearance: none;
    width: 9px;
    height: 8px;
    margin: 12px 0 0 -1px;
    background: radial-gradient(circle at 50% 60%, #fff 2px, #2f8f3c 3px);
    clip-path: polygon(50% 0, 100% 70%, 100% 100%, 0 100%, 0 70%);
}
.red {
    background: linear-gradient(90deg, #000, #f00);
}
.green {
    background: linear-gradient(90deg, #000, #0f0);
}
.blue {
    background: linear-gradient(90deg, #000, #00f);
}
.num {
    width: 31px;
    height: 19px;
    padding: 0 3px 2px;
    background: #fff;
    border: 1px solid #ccd2dc;
}
.spectrum {
    display: flex;
    justify-content: flex-end;
    height: 13px;
    margin-top: 9px;
    background: linear-gradient(rgba(255, 255, 255, 0.7), transparent 50%, #000), linear-gradient(90deg, #e00, #ff0 16%, #0a3 32%, #0af 48%, #219 64%, #e08 80%, #e11 96%);
}
.spectrum span {
    width: 7px;
    background: linear-gradient(#fff 50%, #000 50%);
}
.mask-body {
    height: 199px;
    padding: 7px 32px 0 3px;
}
.mask-head {
    height: 27px;
    display: flex;
    align-items: flex-start;
    gap: 10px;
    padding-right: 2px;
    border-bottom: 1px solid #999;
}
.mask-head svg {
    margin-top: 3px;
}
.mask-head em {
    flex: 1;
    margin: 3px 0 0 -5px;
    font-size: 10px;
    font-weight: bold;
    color: #000;
}
.mask-thumb {
    width: 26px;
    height: 19px;
    background: #fff;
}
.mask-row {
    display: flex;
    justify-content: space-between;
    align-items: center;
    margin-top: 5px;
}
.mask-row label, .refine span, .layer-row label, .dim {
    color: #999;
    text-shadow: 1px 1px 0 #f2f2f2;
}
.mask-row input {
    width: 48px;
    height: 20px;
    border: 1px solid #aaa;
    box-shadow: inset 0 0 0 1px #eee;
}
.rail {
    height: 4px;
    margin: 5px 4px 0;
    border-top: 1px solid #999;
    background: #f4f4f4;
}
.refine {
    display: flex;
    justify-content: space-between;
    margin-top: 9px;
}
.refine div {
    display: flex;
    flex-direction: column;
    gap: 8px;
}
.refine button {
    width: 68px;
    height: 16px;
    line-height: 14px;
    border: 1px solid #aaa;
    border-radius: 2px;
    background: #f2f2f2;
    color: #777;
}
.mask-foot {
    display: flex;
    align-items: center;
    gap: 10px;
    height: 14px;
    margin-top: 7px;
    padding: 0 6px 0 5px;
    border-top: 1px solid #999;
}
.mask-foot .last {
    margin-left: auto;
}
.layers {
    flex: 1;
    min-height: 0;
    display: flex;
    flex-direction: column;
}
.layer-row {
    height: 24px;
    display: flex;
    align-items: center;
    padding: 0 4px 0 3px;
    border-bottom: 1px solid #aaa;
}
.blend {
    appearance: none;
    width: 104px;
    height: 19px;
    padding-left: 5px;
    border: 1px solid #bbb;
    background: linear-gradient(#999, #999) right 4px top 7px / 7px 1px no-repeat, linear-gradient(#999, #999) right 5px top 8px / 5px 1px no-repeat, linear-gradient(#999, #999) right 6px top 9px / 3px 1px no-repeat, linear-gradient(#ccc, #ccc) right 15px top / 1px 100% no-repeat, #fff;
    color: #444;
}
.blend + label {
    margin-left: 3px;
}
.layer-row label {
    white-space: nowrap;
    font-size: 10px;
}
.pct {
    display: flex;
    height: 16px;
    margin-left: auto;
    border: 1px solid #aaa;
}
.pct input {
    width: 35px;
    padding-left: 2px;
    font-size: 10px;
    border-right: 1px solid #aaa;
    color: #777;
}
.pct button {
    width: 12px;
    padding-left: 4px;
}
.pct .right {
    background: #999;
}
.locks {
    gap: 5px;
    height: 23px;
    color: #666;
}
.locks .dim {
    margin-right: 2px;
}
.locks label {
    margin-left: auto;
}
.locks .pct {
    margin-left: 0;
}
.layer-area {
    flex: 1;
    min-height: 0;
    display: flex;
}
.layer-list {
    flex: 1;
}
.layer {
    height: 27px;
    display: flex;
    border-bottom: 1px solid #999;
}
.eye {
    width: 20px;
    display: flex;
    align-items: center;
    justify-content: center;
    border-right: 1px solid #999;
}
.layer-main {
    flex: 1;
    display: flex;
    align-items: center;
    padding: 0 13px 0 3px;
    background: #3399ff;
    color: #fff;
}
.layer-main em {
    flex: 1;
    margin-left: 8px;
    font-size: 10px;
}
.layer-thumb {
    width: 28px;
    height: 21px;
    background: #fff;
    border: 1px solid #000;
}
.lscroll {
    width: 15px;
    display: flex;
    flex-direction: column;
    align-items: center;
    justify-content: space-between;
    padding: 6px 0;
    background: #eee;
    border-left: 1px solid #ddd;
}
.lscroll span {
    background: #888;
}
.layer-foot {
    display: flex;
    align-items: center;
    justify-content: space-between;
    height: 16px;
    padding: 0 20px 0 38px;
    border-top: 1px solid #999;
    color: #777;
}
.layer-foot i {
    font-family: "Liberation Serif", serif;
    font-size: 13px;
    font-weight: bold;
}

/* Bottom of the desktop */
.taskbar {
    height: 5px;
    display: flex;
    gap: 6px;
    padding-left: 103px;
    border-top: 1px solid #234;
    background: linear-gradient(90deg, #2c7c9c, #2f86a8 360px, #3d93cc 420px, #1b62ab);
}
.taskbar i {
    width: 48px;
    background: #9cc8d8;
    border: 1px solid #e8f6fa;
    border-bottom: 0;
}
.taskbar i:nth-child(3) {
    background: #cfeaf4;
}

/* Shape picker */
.picker {
    position: absolute;
    left: 231px;
    top: 77px;
    display: flex;
    align-items: flex-start;
    width: 220px;
    height: 134px;
    padding: 11px 0 0 10px;
    background: #d6d6d6;
    border: 1px solid #888;
    border-top-color: #eee;
    border-left-color: #eee;
    border-right-width: 2px;
    border-bottom-width: 2px;
}
.picker-grid {
    display: grid;
    grid-template-columns: repeat(6, 1fr);
    grid-template-rows: repeat(4, 1fr);
    width: 165px;
    height: 111px;
    border-top: 1px solid #444;
    border-left: 1px solid #888;
}
.picker-grid button {
    display: flex;
    align-items: center;
    justify-content: center;
    background: #fff;
    border-right: 1px solid #000;
    border-bottom: 1px solid #000;
}
.picker-grid svg {
    width: 24px;
    height: 24px;
}
.picker-grid .chosen {
    border: 1px solid #000;
    outline: 1px solid #000;
}
.picker-grid .tm {
    font-family: "Liberation Sans", sans-serif;
    font-size: 16px;
    font-weight: bold;
    color: #222;
}
.picker-scroll {
    width: 14px;
    height: 111px;
    display: flex;
    flex-direction: column;
    align-items: center;
    justify-content: space-between;
    padding: 6px 0;
    background: #eee;
}
.picker-scroll .thumb {
    width: 11px;
    height: 44px;
    margin-top: 34px;
}
.picker-menu {
    margin-left: 8px;
}
.callout {
    position: absolute;
    left: 360px;
    top: 120px;
}

/* Watermark */
.watermark {
    position: absolute;
    left: 839px;
    top: 730px;
    color: rgba(250, 250, 250, 0.8);
    text-shadow: 0 0 2px #999;
}
.brand {
    display: flex;
    align-items: flex-end;
    height: 64px;
}
.bai {
    font: bold 43px/38px "Liberation Sans", sans-serif;
}
.pawmark {
    position: relative;
    opacity: 0.9;
}
.pawmark b {
    position: absolute;
    left: 12px;
    bottom: 4px;
    font: bold 29px/28px "Liberation Sans", sans-serif;
    color: #c0c0c0;
}
.jingyan {
    margin-left: 1px;
    font: bold 33px/38px "Noto Sans CJK SC", sans-serif;
}
.url {
    margin-left: 5px;
    font: 22px/30px "Noto Sans", sans-serif;
}
```
